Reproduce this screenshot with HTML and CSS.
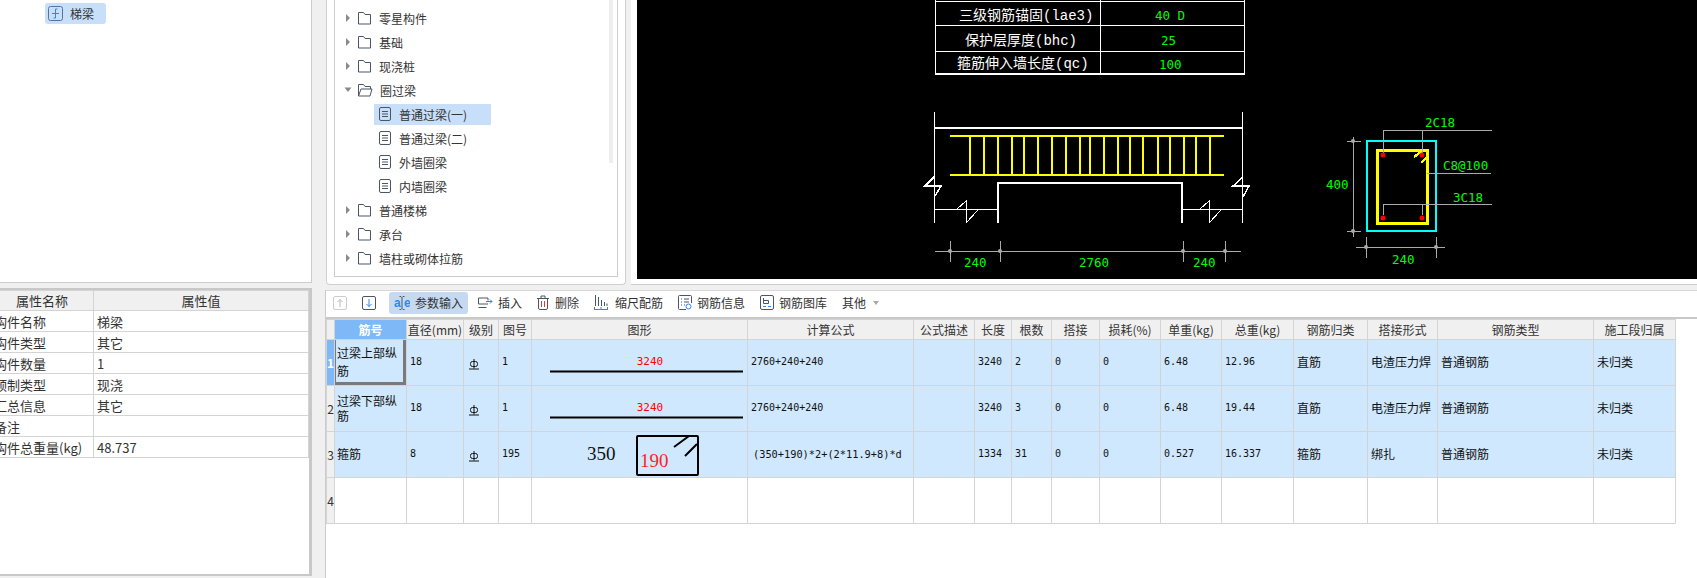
FILE: index.html
```html
<!DOCTYPE html>
<html lang="zh-CN">
<head>
    <meta charset="UTF-8">
    <title>参数输入</title>
    <link rel="stylesheet" href="styles.css">
</head>
<body>
    <svg class="defs" width="0" height="0">
        <symbol id="folder" viewBox="0 0 15 14">
            <path d="M1.5 13V1.5h5l1.5 2h5.5V13z" fill="none" stroke="#4a5664"/>
        </symbol>
        <symbol id="folder-open" viewBox="0 0 16 14">
            <path d="M1.5 13V1.5h5l1.5 2h5.5v2.5M1.5 13l2.5-7h11l-2 7z" fill="none" stroke="#4a5664"/>
        </symbol>
        <symbol id="doc" viewBox="0 0 12 14">
            <rect x="0.5" y="0.5" width="11" height="13" rx="1.5" fill="none" stroke="#4a5664"/>
            <path d="M3 4.5h6M3 7h6M3 9.5h6" stroke="#4a5664"/>
        </symbol>
        <symbol id="closed" viewBox="0 0 6 10">
            <path d="M1 1l4 4-4 4z" fill="#8a8a8a"/>
        </symbol>
        <symbol id="opened" viewBox="0 0 8 6">
            <path d="M0.5 0.5h7l-3.500 4.500z" fill="#8a8a8a"/>
        </symbol>
        <symbol id="grade" viewBox="0 0 10 11">
            <path d="M5 0v9.500M0 10h10" stroke="#111"/>
            <rect x="1.500" y="2.500" width="7" height="5" rx="2" fill="none" stroke="#111"/>
        </symbol>
    </svg>

    <div class="top">
        <div class="type-panel">
            <div class="type-node">
                <svg width="15" height="15" viewBox="0 0 15 15">
                    <rect x="0.500" y="0.500" width="14" height="14" rx="2" fill="none" stroke="#51759c"/>
                    <path d="M7.500 3v9M4 7.500h7M7.500 3h2M5.500 12h2" fill="none" stroke="#2d87f0"/>
                </svg>
                <span>梯梁</span>
            </div>
        </div>

        <div class="tree-panel">
            <div class="tree-box">
                <div class="tree-row"><svg class="arrow" width="6" height="10"><use href="#closed"/></svg><svg class="folder" width="15" height="14"><use href="#folder"/></svg>零星构件</div>
                <div class="tree-row"><svg class="arrow" width="6" height="10"><use href="#closed"/></svg><svg class="folder" width="15" height="14"><use href="#folder"/></svg>基础</div>
                <div class="tree-row"><svg class="arrow" width="6" height="10"><use href="#closed"/></svg><svg class="folder" width="15" height="14"><use href="#folder"/></svg>现浇桩</div>
                <div class="tree-row"><svg class="arrow open" width="8" height="6"><use href="#opened"/></svg><svg class="folder" width="16" height="14"><use href="#folder-open"/></svg>圈过梁</div>
                <div class="tree-row child"><span class="leaf selected"><svg width="12" height="14"><use href="#doc"/></svg>普通过梁(一)</span></div>
                <div class="tree-row child"><span class="leaf"><svg width="12" height="14"><use href="#doc"/></svg>普通过梁(二)</span></div>
                <div class="tree-row child"><span class="leaf"><svg width="12" height="14"><use href="#doc"/></svg>外墙圈梁</span></div>
                <div class="tree-row child"><span class="leaf"><svg width="12" height="14"><use href="#doc"/></svg>内墙圈梁</span></div>
                <div class="tree-row"><svg class="arrow" width="6" height="10"><use href="#closed"/></svg><svg class="folder" width="15" height="14"><use href="#folder"/></svg>普通楼梯</div>
                <div class="tree-row"><svg class="arrow" width="6" height="10"><use href="#closed"/></svg><svg class="folder" width="15" height="14"><use href="#folder"/></svg>承台</div>
                <div class="tree-row"><svg class="arrow" width="6" height="10"><use href="#closed"/></svg><svg class="folder" width="15" height="14"><use href="#folder"/></svg>墙柱或砌体拉筋</div>
                <div class="tree-row"><svg class="arrow" width="6" height="10"><use href="#closed"/></svg><svg class="folder" width="15" height="14"><use href="#folder"/></svg></div>
                <div class="tree-scroll"></div>
            </div>
        </div>

        <div class="drawing-panel">
            <svg class="cad" width="1060" height="279" viewBox="637 0 1060 279" shape-rendering="crispEdges">
                <!-- parameter table -->
                <g stroke="#fff" fill="none">
                    <path d="M935 0V74M1100 0V74M1244 0V74M935 1H1244M935 25H1244M935 51H1244"/>
                    <path d="M935 74H1245" stroke-width="2"/>
                </g>
                <g class="cad-label" fill="#fff">
                    <text x="959" y="20">三级钢筋锚固(lae3)</text>
                    <text x="965" y="45">保护层厚度(bhc)</text>
                    <text x="957" y="68">箍筋伸入墙长度(qc)</text>
                </g>
                <g class="cad-num" fill="#0f0">
                    <text x="1155" y="20">40 D</text>
                    <text x="1161" y="45">25</text>
                    <text x="1159" y="69">100</text>
                </g>

                <!-- beam elevation -->
                <g stroke="#fff" fill="none">
                    <path d="M934.500 112V223M1242.500 112V223" stroke-width="1.500"/>
                    <path d="M934 128H1242" stroke-width="2"/>
                    <path d="M998 223V183H1182V223" stroke-width="2"/>
                    <path d="M934 209H998M1182 209H1242"/>
                    <path d="M957 209L966 201V223L978 210M1200 209L1209 201V223L1221 210"/>
                    <path d="M934 177L925 186H941L935 196M1242 178L1233 186H1249L1243 197" stroke-width="1.500"/>
                </g>
                <g stroke="#ff0" fill="none" stroke-width="2">
                    <path d="M950 136H1224M950 175H1224"/>
                    <path d="M970 136V175M984 136V175M998 136V175M1012 136V175M1024 136V175M1038 136V175M1052 136V175M1066 136V175M1080 136V175M1090 136V175M1104 136V175M1118 136V175M1130 136V175M1143 136V175M1158 136V175M1170 136V175M1184 136V175M1196 136V175M1210 136V175"/>
                </g>
                <g stroke="#aaa" fill="none">
                    <path d="M935 251H1241M950 241V262M1000 241V262M1183 241V262M1225 241V262"/>
                </g>
                <g fill="#aaa" shape-rendering="auto">
                    <circle cx="950" cy="251" r="2"/>
                    <circle cx="1000" cy="251" r="2"/>
                    <circle cx="1183" cy="251" r="2"/>
                    <circle cx="1225" cy="251" r="2"/>
                </g>
                <g class="cad-num" fill="#0f0">
                    <text x="964" y="267">240</text>
                    <text x="1079" y="267">2760</text>
                    <text x="1193" y="267">240</text>
                </g>

                <!-- beam section -->
                <rect x="1367" y="141" width="69" height="90" fill="none" stroke="#0ff" stroke-width="2"/>
                <rect x="1377.500" y="150.500" width="50" height="73" fill="none" stroke="#ff0" stroke-width="3"/>
                <path d="M1414 157L1422 151M1421 163L1428 156" stroke="#ff0" stroke-width="2.500"/>
                <g stroke="#aaa" fill="none">
                    <path d="M1383 155V130H1492M1422 155V130M1427 173H1491M1383 215V204H1492M1422 215V204"/>
                    <path d="M1353 137V237M1347 141H1361M1347 231H1361M1356 247H1445M1366 237V258M1436 237V258"/>
                </g>
                <g fill="#aaa" shape-rendering="auto">
                    <circle cx="1353" cy="141" r="2"/>
                    <circle cx="1353" cy="231" r="2"/>
                    <circle cx="1366" cy="247" r="2"/>
                    <circle cx="1436" cy="247" r="2"/>
                </g>
                <g fill="#f00" shape-rendering="auto">
                    <circle cx="1383" cy="155" r="2.500"/>
                    <circle cx="1422" cy="155" r="2.500"/>
                    <circle cx="1383" cy="218" r="2.500"/>
                    <circle cx="1422" cy="218" r="2.500"/>
                </g>
                <g class="cad-num" fill="#0f0">
                    <text x="1425" y="127">2C18</text>
                    <text x="1443" y="170">C8@100</text>
                    <text x="1453" y="202">3C18</text>
                    <text x="1326" y="189">400</text>
                    <text x="1392" y="264">240</text>
                </g>
            </svg>
        </div>
    </div>

    <div class="bottom">
        <div class="props-panel">
            <table class="props">
                <colgroup><col class="props-name"><col></colgroup>
                <tr><th>属性名称</th><th>属性值</th></tr>
                <tr><td>构件名称</td><td>梯梁</td></tr>
                <tr><td>构件类型</td><td>其它</td></tr>
                <tr><td>构件数量</td><td>1</td></tr>
                <tr><td>预制类型</td><td>现浇</td></tr>
                <tr><td>汇总信息</td><td>其它</td></tr>
                <tr><td>备注</td><td></td></tr>
                <tr><td>构件总重量(kg)</td><td>48.737</td></tr>
            </table>
        </div>

        <div class="rebar-panel">
            <div class="toolbar">
                <div class="tool">
                    <svg width="14" height="14" viewBox="0 0 14 14"><rect x="0.500" y="0.500" width="13" height="13" rx="1.500" fill="none" stroke="#ccc"/><path d="M7 11V3.500M4.500 6L7 3.500 9.500 6" fill="none" stroke="#bbb"/></svg>
                </div>
                <div class="tool">
                    <svg width="14" height="14" viewBox="0 0 14 14"><rect x="0.500" y="0.500" width="13" height="13" rx="1.500" fill="none" stroke="#4a5664"/><path d="M7 3v7.500M4.500 8L7 10.500 9.500 8" fill="none" stroke="#2d87f0"/></svg>
                </div>
                <div class="tool active">
                    <svg width="16" height="16" viewBox="0 0 16 16"><text class="icon-letter" x="0" y="12">a</text><text class="icon-letter" x="10" y="12">e</text><path d="M5.500 1.500h1.500l1 1 1-1h1.500M8 2.500v11M5.500 14.500H7l1-1 1 1h1.500" fill="none" stroke="#4a5664"/></svg>
                    <span>参数输入</span>
                </div>
                <div class="tool gap-5">
                    <svg width="15" height="12" viewBox="0 0 15 12"><path d="M10 3.500V1H.5v6H10M.5 10.500h8" fill="none" stroke="#4a5664"/><path d="M8 4.500h6M12 2.500l2 2-2 2" fill="none" stroke="#2d87f0"/></svg>
                    <span>插入</span>
                </div>
                <div class="tool gap-6">
                    <svg width="12" height="15" viewBox="0 0 12 15"><path d="M0 3.500h12M4 3.500V1h4v2.500M1.500 3.500V13q0 1.500 1.500 1.500h6q1.500 0 1.500-1.500V3.500" fill="none" stroke="#4a5664"/><path d="M4.500 6v6M7.500 6v6" stroke="#e8392b"/></svg>
                    <span>删除</span>
                </div>
                <div class="tool gap-7">
                    <svg width="14" height="15" viewBox="0 0 14 15"><path d="M1.500 0v11M4.500 2v9M7.500 5v6M10.500 7v4M13 8.500v2.500" stroke="#4a5664"/><path d="M0 14.500h14M.5 12v3M7 12v3M13.500 12v3" stroke="#2d87f0"/></svg>
                    <span>缩尺配筋</span>
                </div>
                <div class="tool gap-5">
                    <svg width="14" height="15" viewBox="0 0 14 15"><path d="M8 14.500H1.500q-1 0-1-1v-12q0-1 1-1h11q1 0 1 1V8" fill="none" stroke="#4a5664"/><path d="M3 4h1M6 4h5M3 7h1M6 7h5M3 10h1M6 10h1" stroke="#4a5664"/><circle cx="10.500" cy="11.500" r="2.500" fill="none" stroke="#2d87f0"/></svg>
                    <span>钢筋信息</span>
                </div>
                <div class="tool gap-5">
                    <svg width="14" height="15" viewBox="0 0 14 15"><rect x="0.500" y="0.500" width="13" height="14" rx="1.500" fill="none" stroke="#4a5664"/><path d="M3.500 3v5.500h5V5.500h-5" fill="none" stroke="#4a5664"/><path d="M3 11.500h3M8 11.500h3" stroke="#2d87f0"/></svg>
                    <span>钢筋图库</span>
                </div>
                <div class="tool other">
                    <span>其他</span>
                    <svg width="6" height="4" viewBox="0 0 6 4"><path d="M0 0h6L3 4z" fill="#aaa"/></svg>
                </div>
            </div>

            <table class="rebar">
                <colgroup>
                    <col class="w8"><col class="w72"><col class="w57"><col class="w35"><col class="w33"><col class="w216"><col class="w166"><col class="w61"><col class="w37"><col class="w40"><col class="w48"><col class="w61"><col class="w61"><col class="w72"><col class="w74"><col class="w70"><col class="w156"><col class="w82">
                </colgroup>
                <tr>
                    <th></th><th class="head-on">筋号</th><th>直径(mm)</th><th>级别</th><th>图号</th><th>图形</th><th>计算公式</th><th>公式描述</th><th>长度</th><th>根数</th><th>搭接</th><th>损耗(%)</th><th>单重(kg)</th><th>总重(kg)</th><th>钢筋归类</th><th>搭接形式</th><th>钢筋类型</th><th>施工段归属</th>
                </tr>
                <tr class="on">
                    <th class="row-on">1</th>
                    <td class="name current">过梁上部纵筋</td><td class="num">18</td><td class="grade"><svg width="10" height="11"><use href="#grade"/></svg></td><td class="num">1</td>
                    <td class="fig"><svg width="215" height="45" viewBox="1 0 215 45"><text class="fig-len" x="119" y="25">3240</text><path d="M19 31.500H212" stroke="#000" stroke-width="2"/></svg></td>
                    <td class="num">2760+240+240</td><td></td><td class="num">3240</td><td class="num">2</td><td class="num">0</td><td class="num">0</td><td class="num">6.48</td><td class="num">12.96</td><td>直筋</td><td>电渣压力焊</td><td>普通钢筋</td><td>未归类</td>
                </tr>
                <tr class="on">
                    <th>2</th>
                    <td class="name tight">过梁下部纵筋</td><td class="num">18</td><td class="grade"><svg width="10" height="11"><use href="#grade"/></svg></td><td class="num">1</td>
                    <td class="fig"><svg width="215" height="45" viewBox="1 0 215 45"><text class="fig-len" x="119" y="25">3240</text><path d="M19 31.500H212" stroke="#000" stroke-width="2"/></svg></td>
                    <td class="num">2760+240+240</td><td></td><td class="num">3240</td><td class="num">3</td><td class="num">0</td><td class="num">0</td><td class="num">6.48</td><td class="num">19.44</td><td>直筋</td><td>电渣压力焊</td><td>普通钢筋</td><td>未归类</td>
                </tr>
                <tr class="on">
                    <th>3</th>
                    <td class="name">箍筋</td><td class="num">8</td><td class="grade"><svg width="10" height="11"><use href="#grade"/></svg></td><td class="num">195</td>
                    <td class="fig"><svg width="215" height="45" viewBox="1 0 215 45"><text class="fig-big" x="56" y="28">350</text><text class="fig-big red" x="109" y="35">190</text><rect x="106" y="4" width="61" height="39" rx="1" fill="none" stroke="#000" stroke-width="2"/><path d="M143 15L158 4M154 24L166 12" stroke="#000" stroke-width="2" fill="none"/></svg></td>
                    <td class="num formula">(350+190)*2+(2*11.9+8)*d</td><td></td><td class="num">1334</td><td class="num">31</td><td class="num">0</td><td class="num">0</td><td class="num">0.527</td><td class="num">16.337</td><td>箍筋</td><td>绑扎</td><td>普通钢筋</td><td>未归类</td>
                </tr>
                <tr>
                    <th>4</th><td></td><td></td><td></td><td></td><td></td><td></td><td></td><td></td><td></td><td></td><td></td><td></td><td></td><td></td><td></td><td></td><td></td>
                </tr>
            </table>
        </div>
    </div>
</body>
</html>
```

FILE: styles.css
```css
* {
    box-sizing: border-box;
}
html, body {
    margin: 0;
    height: 100%;
}
body {
    width: 1697px;
    height: 578px;
    overflow: hidden;
    background-color: #f0f0f0;
    color: #333;
    font-family: "Noto Sans CJK SC", "Liberation Sans", sans-serif;
    font-size: 12px;
}
svg {
    flex: none;
}
.defs {
    position: absolute;
}

/* top row */
.top {
    display: flex;
    height: 285px;
}
.type-panel {
    width: 312px;
    height: 283px;
    padding: 3px 0 0 45px;
    background-color: #fff;
    border-right: 1px solid #ccc;
    border-bottom: 1px solid #ccc;
}
.type-node {
    display: flex;
    align-items: center;
    gap: 7px;
    width: 61px;
    height: 21px;
    padding-left: 3px;
    background-color: #c8dffa;
    border-radius: 3px;
}
.tree-panel {
    width: 300px;
    height: 285px;
    margin-left: 14px;
    padding: 0 7px 7px;
    background-color: #fff;
    border: 1px solid #d0d0d0;
    border-top: none;
    border-radius: 0 0 4px 4px;
}
.tree-box {
    position: relative;
    height: 277px;
    padding-top: 6px;
    overflow: hidden;
    border: 1px solid #ccc;
    border-top: none;
}
.tree-row {
    display: flex;
    align-items: center;
    height: 24px;
    padding-left: 10px;
}
.arrow {
    margin-right: 6px;
}
.arrow.open {
    margin-left: -1px;
    margin-right: 5px;
}
.folder {
    margin-right: 7px;
}
.tree-row.child {
    padding-left: 39px;
}
.leaf {
    display: flex;
    align-items: center;
    gap: 8px;
    width: 117px;
    height: 21px;
    padding-left: 5px;
}
.leaf.selected {
    background-color: #c8dffa;
}
.tree-scroll {
    position: absolute;
    top: 0;
    right: 4px;
    width: 4px;
    height: 163px;
    background-color: #eee;
}
.drawing-panel {
    flex: 1;
    height: 285px;
    margin-left: 5px;
    padding-left: 6px;
    background-color: #fff;
    border-bottom: 1px solid #ccc;
}
.cad {
    display: block;
    background-color: #000;
}
.cad-label text {
    font-family: "Liberation Mono", "Noto Sans CJK SC", monospace;
    font-size: 14px;
}
.cad-num text {
    font-family: "DejaVu Sans Mono", monospace;
    font-size: 12.500px;
}

/* bottom row */
.bottom {
    display: flex;
    height: 293px;
}
.props-panel {
    width: 312px;
    height: 288px;
    margin-top: 3px;
    overflow: hidden;
    background-color: #fff;
    border-top: 2px solid #c8c8c8;
    border-right: 3px solid #c8c8c8;
    border-bottom: 2px solid #c8c8c8;
}
.props {
    width: 319px;
    margin-left: -10px;
    table-layout: fixed;
    border-collapse: collapse;
    font-size: 13px;
}
.props-name {
    width: 103px;
}
.props th, .props td {
    height: 21px;
    padding: 0 0 0 3px;
    font-weight: normal;
    white-space: nowrap;
    border: 1px solid #d4d4d4;
}
.props th {
    height: 20px;
    padding: 0;
    background-color: #f0f0f0;
}
.rebar-panel {
    flex: 1;
    margin: 5px 0 0 13px;
    background-color: #fff;
    border-left: 1px solid #ccc;
}
.toolbar {
    display: flex;
    align-items: center;
    gap: 5px;
    height: 29px;
    padding: 0 0 3px 2px;
    border-bottom: 2px solid #c8c8c8;
    border-top: 1px solid #d8d8d8;
}
.tool {
    display: flex;
    align-items: center;
    height: 22px;
    padding: 0 5px;
}
.tool.active {
    gap: 5px;
    margin-left: 3px;
    background-color: #c5daf0;
    border-radius: 3px;
}
.gap-5 {
    gap: 5px;
}
.gap-6 {
    gap: 6px;
}
.gap-7 {
    gap: 7px;
}
.other {
    gap: 7px;
}
.icon-letter {
    fill: #2d87f0;
    font-family: "Liberation Sans", sans-serif;
    font-size: 12px;
    font-weight: bold;
}

/* rebar table */
.rebar {
    width: 1349px;
    table-layout: fixed;
    border-collapse: collapse;
    color: #111;
}
.w8 { width: 8px; }
.w33 { width: 33px; }
.w35 { width: 35px; }
.w37 { width: 37px; }
.w40 { width: 40px; }
.w48 { width: 48px; }
.w57 { width: 57px; }
.w61 { width: 61px; }
.w70 { width: 70px; }
.w72 { width: 72px; }
.w74 { width: 74px; }
.w82 { width: 82px; }
.w156 { width: 156px; }
.w166 { width: 166px; }
.w216 { width: 216px; }
.rebar th, .rebar td {
    padding: 0 0 2px 3px;
    border: 1px solid #d4d4d4;
}
.rebar th {
    height: 20px;
    padding: 0;
    overflow: hidden;
    background-color: #f0f0f0;
    color: #333;
    font-weight: normal;
    white-space: nowrap;
}
.rebar td {
    height: 46px;
}
.rebar .head-on {
    background-color: #7fb8f7;
    color: #fff;
    font-weight: bold;
}
.rebar .row-on {
    background-color: #7fb8f7;
    color: #fff;
    font-weight: bold;
}
.on td {
    background-color: #cfe8fd;
}
.rebar .name {
    padding-left: 2px;
    line-height: 18px;
}
.rebar .name.tight {
    line-height: 15px;
}
.current {
    box-shadow: inset 1px 0 0 #7a7a7a, inset -3px -3px 0 #7a7a7a;
}
.rebar .num {
    font-family: "DejaVu Sans Mono", monospace;
    font-size: 10px;
    white-space: nowrap;
}
.rebar .formula {
    padding-left: 5px;
    font-size: 10.300px;
}
.rebar .grade svg {
    display: block;
    margin: 5px 0 0 2px;
}
.rebar .fig {
    padding: 0;
}
.fig svg {
    display: block;
}
.fig-len {
    fill: #f00;
    font-family: "DejaVu Sans Mono", monospace;
    font-size: 11px;
    text-anchor: middle;
}
.fig-big {
    fill: #111;
    font-family: "Liberation Serif", serif;
    font-size: 19px;
}
.fig-big.red {
    fill: #f22;
}
```
